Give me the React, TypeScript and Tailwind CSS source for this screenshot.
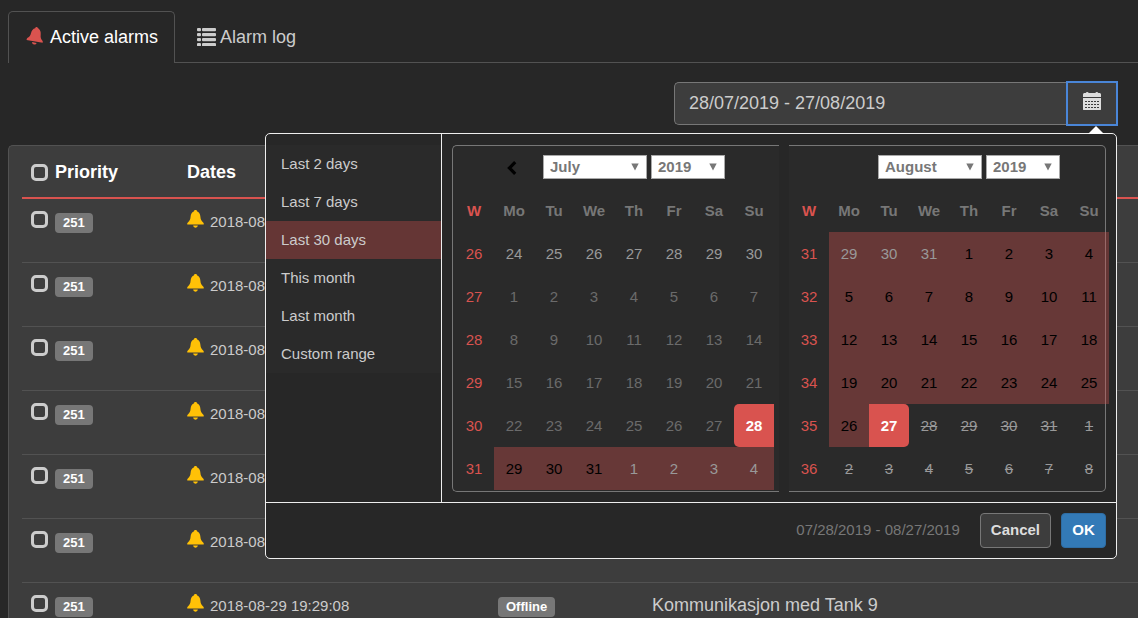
import React from "react";

function Bell({ className }: { className: string }) {
  return (
    <svg viewBox="0 0 17 18" className={className} fill="currentColor" aria-hidden="true">
      <path d="M8.5 0C9.500 0 10 .6 10.200 1.400C12.300 2.300 13.200 4.200 13.400 6.800C13.600 9.400 14.200 10.700 15.900 12.200C16.700 12.900 16.900 13.600 16.700 14.400H.3C.1 13.600.3 12.900 1.100 12.200C2.800 10.700 3.400 9.400 3.600 6.800C3.800 4.200 4.700 2.300 6.800 1.400C7 .6 7.500 0 8.500 0z" />
      <path d="M6.200 15.600h4.600c-.2 1.300-1.100 2.100-2.300 2.100s-2.100-.8-2.300-2.100z" />
    </svg>
  );
}

function ListIcon() {
  return (
    <svg viewBox="0 0 19 18" className="h-[18px] w-[19px]" fill="currentColor" aria-hidden="true">
      {[0, 5, 10, 15].map((y) => (
        <g key={y}>
          <rect x="0" y={y} width="4" height="3.2" rx="1" />
          <rect x="5" y={y} width="14" height="3.2" rx="1" />
        </g>
      ))}
    </svg>
  );
}

function CalendarIcon() {
  return (
    <svg viewBox="0 0 18 18" className="h-[18px] w-[18px]" fill="currentColor" aria-hidden="true">
      <path d="M1.500 1H2.700C3 .4 3.500 0 4.200 0s1.200.4 1.500 1h6.600c.3-.6.8-1 1.500-1s1.200.4 1.500 1h1.200c.8 0 1.500.7 1.500 1.500V5H0V2.500C0 1.700.7 1 1.500 1z" />
      <path
        fillRule="evenodd"
        d="M0 6h18v11.500c0 .3-.2.500-.5.500H.5c-.3 0-.5-.2-.5-.5zM2 9v1h2V9zm3 0v1h2V9zm3 0v1h2V9zm3 0v1h2V9zm3 0v1h2V9zM2 12v1h2v-1zm3 0v1h2v-1zm3 0v1h2v-1zm3 0v1h2v-1zm3 0v1h2v-1zM2 15v1h2v-1zm3 0v1h2v-1zm3 0v1h2v-1zm3 0v1h2v-1zm3 0v1h2v-1z"
      />
    </svg>
  );
}

function Check({ label }: { label: string }) {
  return (
    <input
      type="checkbox"
      aria-label={label}
      className="h-[17px] w-[17px] shrink-0 appearance-none rounded-[5px] border-3 border-[#ccc]"
    />
  );
}

const MONTHS = ["January", "February", "March", "April", "May", "June", "July", "August", "September", "October", "November", "December"];
const DAYS = ["Mo", "Tu", "We", "Th", "Fr", "Sa", "Su"];

type Kind = "off" | "past" | "in" | "offIn" | "start" | "end" | "disabled";

const CELL: Record<Kind, string> = {
  off: "text-[#999]",
  past: "text-[#6b6b6b]",
  in: "bg-[#d9534f]/35 text-black",
  offIn: "bg-[#d9534f]/35 text-[#999]",
  start: "rounded-l-[5px] bg-[#d9534f] text-white font-bold",
  end: "rounded-r-[5px] bg-[#d9534f] text-white font-bold",
  disabled: "text-[#999] line-through",
};

interface Month {
  name: string;
  firstWeek: number;
  days: number[];
  kind: (i: number) => Kind;
}

const range = (a: number, b: number) => Array.from({ length: b - a + 1 }, (_, i) => a + i);

const july: Month = {
  name: "July",
  firstWeek: 26,
  days: [...range(24, 30), ...range(1, 31), ...range(1, 4)],
  kind: (i) => (i < 7 ? "off" : i < 34 ? "past" : i === 34 ? "start" : i < 38 ? "in" : "offIn"),
};

const august: Month = {
  name: "August",
  firstWeek: 31,
  days: [...range(29, 31), ...range(1, 31), ...range(1, 8)],
  kind: (i) => (i < 3 ? "offIn" : i < 29 ? "in" : i === 29 ? "end" : "disabled"),
};

function Picker({ label, value, options, width }: { label: string; value: string; options: string[]; width: string }) {
  return (
    <span className={`relative inline-block ${width}`}>
      <select
        aria-label={label}
        defaultValue={value}
        className="block h-6 w-full appearance-none border border-[#a9a9a9] bg-white pl-1.5 text-[15px] leading-5 font-bold text-[#777]"
      >
        {options.map((o) => (
          <option key={o}>{o}</option>
        ))}
      </select>
      <svg viewBox="0 0 8 8" className="pointer-events-none absolute top-2 right-2 h-2 w-2" fill="#777" aria-hidden="true">
        <path d="M0.300 0.500h7.400L4 7.500z" />
      </svg>
    </span>
  );
}

function Calendar({ month, prev }: { month: Month; prev?: boolean }) {
  return (
    <table className="w-80 table-fixed border-collapse text-center text-[15px] leading-5">
      <thead>
        <tr className="h-[43px]">
          <th className="w-10 p-0" />
          <th className="w-10 p-0">
            {prev && (
              <button type="button" aria-label="Previous month" className="block w-full pl-[13px]">
                <svg viewBox="0 0 10 14" className="h-3.5 w-2.5" fill="none" stroke="#000" strokeWidth="3.200" aria-hidden="true">
                  <path d="M8.200 1.200L2.400 7l5.800 5.800" />
                </svg>
              </button>
            )}
          </th>
          <th colSpan={5} className="p-0 pb-0.5">
            <div className="flex justify-center gap-1">
              <Picker label="Month" value={month.name} options={MONTHS} width="w-[104px]" />
              <Picker label="Year" value="2019" options={["2018", "2019"]} width="w-[74px]" />
            </div>
          </th>
          <th className="w-10 p-0" />
        </tr>
        <tr className="h-[43px] text-[#777]">
          <th className="p-0 text-[#d9534f]">W</th>
          {DAYS.map((d) => (
            <th key={d} className="p-0">{d}</th>
          ))}
        </tr>
      </thead>
      <tbody>
        {range(0, 5).map((w) => (
          <tr key={w} className="h-[43px]">
            <td className="p-0 text-[#d9534f]">{month.firstWeek + w}</td>
            {range(0, 6).map((d) => {
              const i = w * 7 + d;
              return (
                <td key={d} className={`p-0 ${CELL[month.kind(i)]}`}>{month.days[i]}</td>
              );
            })}
          </tr>
        ))}
      </tbody>
    </table>
  );
}

const PRESETS = ["Last 2 days", "Last 7 days", "Last 30 days", "This month", "Last month", "Custom range"];

function RangePopup() {
  return (
    <div className="absolute top-[51px] right-0 z-10 rounded-[5px] border border-[#eee] bg-[#272727]">
      <svg viewBox="0 0 16 8" className="absolute -top-2 right-3 h-2 w-4" fill="#fff" aria-hidden="true">
        <path d="M8 0l8 8H0z" />
      </svg>
      <div className="flex border-b border-[#eee]">
        <ul className="w-44 border-r border-[#eee] pt-[11px] text-[15px] leading-[38px] text-[#ccc]">
          {PRESETS.map((p) => (
            <li key={p}>
              <button
                type="button"
                className={`block w-full pl-[15px] text-left ${p === "Last 30 days" ? "bg-[#d9534f]/35" : "bg-[#2a2a2a]"}`}
              >
                {p}
              </button>
            </li>
          ))}
        </ul>
        <div className="flex gap-2.5 px-2.5 pt-[11px] pb-2.5">
          <div className="rounded-l-[5px] border border-r-0 border-[#777] bg-[#2a2a2a] pr-[5px] pb-px pl-px">
            <Calendar month={july} prev />
          </div>
          <div className="w-[317px] rounded-r-[5px] border border-l-0 border-[#777] bg-[#2a2a2a] pb-px">
            <Calendar month={august} />
          </div>
        </div>
      </div>
      <div className="flex items-center justify-end gap-2.5 p-2.5 text-[15px]">
        <span className="mr-2.5 text-[#777]">07/28/2019 - 08/27/2019</span>
        <button type="button" className="h-[35px] rounded border border-[#777] bg-[#3d3d3d] px-2.5 font-bold text-[#ddd]">
          Cancel
        </button>
        <button type="button" className="h-[35px] w-[45px] rounded border border-[#2e6da4] bg-[#337ab7] font-bold text-white">
          OK
        </button>
      </div>
    </div>
  );
}

export default function App() {
  return (
    <div className="h-screen overflow-hidden bg-[#272727] pt-[11px] pl-2 font-['Liberation_Sans',Arial,sans-serif] text-[18px] text-[#ccc]">
      <nav className="flex h-[52px] border-b border-[#525252]">
        <a href="#active" className="flex h-[52px] items-center gap-1.5 rounded-t-[5px] border border-b-0 border-[#525252] bg-[#272727] pr-4 pl-[18px] text-white">
          <Bell className="mb-1 h-[18px] w-[17px] rotate-10 text-[#d9534f]" />
          Active alarms
        </a>
        <a href="#log" className="flex h-[52px] items-center gap-1 px-[22px]">
          <ListIcon />
          Alarm log
        </a>
      </nav>

      <div className="relative mt-[19px] mr-[21px] ml-auto flex h-[43px] w-[443px]">
        <input
          type="text"
          aria-label="Date range"
          defaultValue="28/07/2019 - 27/08/2019"
          className="min-w-0 flex-1 rounded-l-[5px] border border-r-0 border-[#777] bg-[#3d3d3d] px-3.5 outline-none"
        />
        <button
          type="button"
          aria-label="Open calendar"
          className="flex w-[50px] items-center justify-center border border-[#4a86d8] bg-[#3d3d3d] pb-1.5 text-[#ddd] outline outline-[#4a86d8]"
        >
          <CalendarIcon />
        </button>
        <RangePopup />
      </div>

      <main className="mt-5 rounded-tl-[5px] border-t border-l border-[#525252] bg-[#3d3d3d] pl-[13px]">
        <table className="w-full table-fixed border-collapse text-left">
          <thead>
            <tr className="h-[52px] border-b-2 border-[#d9534f] font-bold text-white">
              <th className="w-[157px] p-0 pt-0.5 pl-[9px]">
                <span className="flex items-center gap-[7px]">
                  <Check label="Select all" />
                  Priority
                </span>
              </th>
              <th className="w-[311px] p-0 pt-0.5 pl-2">Dates</th>
              <th className="w-[154px] p-0" />
              <th className="p-0" />
            </tr>
          </thead>
          <tbody>
            {range(1, 7).map((r) => (
              <tr key={r} className="h-16 border-b border-[#525252] align-top">
                <td className="p-0 pt-3 pl-[9px]">
                  <span className="flex gap-[7px]">
                    <Check label={`Select alarm ${r}`} />
                    <span className="mt-0.5 rounded bg-[#777] px-2 text-[13px] leading-5 font-bold text-white">251</span>
                  </span>
                </td>
                <td className="p-0 pt-[11px] pl-2">
                  <span className="flex gap-1.5 text-[15px]">
                    <Bell className="h-[18px] w-[17px] text-[#ffc107]" />
                    <span className="leading-6">2018-08-29 19:29:08</span>
                  </span>
                </td>
                <td className="p-0 pt-3.5 pl-2">
                  <span className="block w-fit rounded bg-[#777] px-2 text-[13px] leading-5 font-bold text-white">Offline</span>
                </td>
                <td className="p-0 pt-2.5 pl-2 leading-6">Kommunikasjon med Tank 9</td>
              </tr>
            ))}
          </tbody>
        </table>
      </main>
    </div>
  );
}
